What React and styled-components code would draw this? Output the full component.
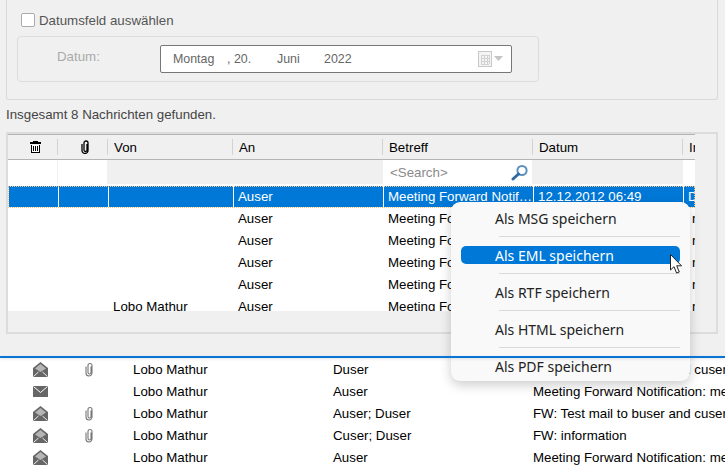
import React from "react";
import styled, { createGlobalStyle } from "styled-components";

const GlobalStyle = createGlobalStyle`
  html, body {
    margin: 0;
    height: 100%;
    overflow: hidden;
    background: #f0f0f0;
  }
  body {
    font-family: "Liberation Sans", Arial, sans-serif;
    font-size: 13.3px;
    color: #000;
  }
`;

const Page = styled.div`
  position: relative;
  width: 725px;
  height: 465px;
  overflow: hidden;
`;

// filter part
const FilterPanel = styled.section`
  box-sizing: border-box;
  width: 712px;
  height: 100px;
  margin-left: 6px;
  padding: 10px 0 0 10px;
  border: 1px solid #d9d9d9;
  border-top: none;
  border-radius: 0 0 3px 3px;
`;
const CheckRow = styled.label`
  display: flex;
  align-items: center;
  gap: 4px;
  height: 20px;
  margin: 0 0 6px 4px;
  color: #555;
`;
const CheckBox = styled.span`
  box-sizing: border-box;
  width: 14px;
  height: 14px;
  background: #fff;
  border: 1px solid #aaa;
  border-radius: 2px;
`;
const DateBox = styled.div`
  box-sizing: border-box;
  display: flex;
  align-items: center;
  width: 522px;
  height: 46px;
  padding-left: 39px;
  border: 1px solid #dcdcdc;
  border-radius: 4px;
`;
const DateLabel = styled.span`
  width: 103px;
  margin-bottom: 5px;
  color: #aaa;
`;
const DateField = styled.div`
  box-sizing: border-box;
  display: flex;
  align-items: center;
  width: 352px;
  height: 28px;
  padding: 0 8px 0 12px;
  background: #fff;
  border: 1px solid #777;
  border-radius: 2px;
  color: #666;
  font-size: 12.4px;
`;
const DatePart = styled.span`
  width: ${(p) => p.$w}px;
`;
const CalendarButton = styled.span`
  display: flex;
  align-items: center;
  margin-left: auto;
`;

const Summary = styled.p`
  box-sizing: border-box;
  height: 32px;
  margin: 0;
  padding: 7px 0 0 6px;
  line-height: 16px;
  color: #444;
`;

// result table
const TableFrame = styled.section`
  box-sizing: border-box;
  width: 712px;
  height: 202px;
  margin-left: 6px;
  border: 2px solid #dcdcdc;
`;
const Table = styled.div`
  width: 687px;
  height: 177px;
  overflow: hidden;
`;
const columns = "50px 50px 125px 150px 150px 150px 150px";
const HeaderRow = styled.div`
  box-sizing: border-box;
  display: grid;
  grid-template-columns: ${columns};
  height: 26px;
  border-top: 1px solid #b4b4b4;
  border-bottom: 1px solid #b4b4b4;
`;
const HeaderCell = styled.div`
  display: flex;
  align-items: center;
  justify-content: ${(p) => (p.$icon ? "center" : "flex-start")};
  padding-left: ${(p) => (p.$icon ? 5 : 6)}px;
  position: relative;
  &::after {
    content: "";
    position: absolute;
    right: 0;
    top: 4px;
    bottom: 4px;
    width: 1px;
    background: #d2d2d2;
  }
`;
const SearchRow = styled.div`
  display: grid;
  grid-template-columns: ${columns};
  height: 24px;
  margin-bottom: 2px;
  box-shadow: 0 2px 0 #fff;
`;
const SearchCell = styled.div`
  display: flex;
  align-items: center;
  justify-content: space-between;
  padding: 0 3px 0 7px;
  margin-right: 1px;
  background: ${(p) => (p.$white ? "#fff" : "#f0f0f0")};
  color: #8a8a8a;
`;
const Rows = styled.div`
  height: 125px;
  background: #fff;
  overflow: hidden;
`;
const Row = styled.div`
  box-sizing: border-box;
  display: grid;
  grid-template-columns: ${columns};
  height: 22px;
  color: ${(p) => (p.$selected ? "#fff" : "#000")};
  background: ${(p) => (p.$selected ? "#0078d7" : "#fff")};
  border-bottom: 1px solid #fff;
  outline: ${(p) => (p.$selected ? "1px dotted #f2c48a" : "none")};
  outline-offset: -1px;
`;
const Cell = styled.div`
  display: flex;
  align-items: center;
  min-width: 0;
  padding-left: ${(p) => p.$pad ?? 4}px;
  border-left: 1px solid ${(p) => (p.$selected ? "#fff" : "transparent")};
  white-space: nowrap;
`;
const CellText = styled.span`
  overflow: hidden;
  text-overflow: ellipsis;
`;

const BlueLine = styled.div`
  position: relative;
  z-index: 1;
  height: 2px;
  margin-top: 22px;
  background: #0a74d4;
  box-shadow: 0 1px 3px rgba(0, 0, 0, 0.12);
`;

// mail list under the splitter
const MailList = styled.section`
  height: 107px;
  background: #fff;
  overflow: hidden;
`;
const MailRow = styled.div`
  display: grid;
  grid-template-columns: 50px 48px 220px 200px 1fr;
  align-items: center;
  height: 22px;
  padding-left: 15px;
  white-space: nowrap;
`;
const IconCell = styled.div`
  display: flex;
  justify-content: center;
`;
const NameCell = styled.div`
  padding-left: 20px;
`;

// context menu
const Menu = styled.div`
  position: absolute;
  left: 451px;
  top: 202px;
  box-sizing: border-box;
  width: 239px;
  height: 179px;
  padding: 0 10px;
  overflow: hidden;
  background: #f9f9f9;
  border-radius: 9px;
  box-shadow: 0 4px 12px rgba(0, 0, 0, 0.2);
  font-family: "Noto Sans", "Open Sans", sans-serif;
  font-size: 14px;
  color: #222;
`;
const MenuItem = styled.div`
  display: flex;
  align-items: center;
  height: ${(p) => (p.$first ? 34 : 36)}px;
`;
const MenuLabel = styled.span`
  box-sizing: border-box;
  display: block;
  width: 219px;
  height: 18px;
  padding-left: 34px;
  line-height: ${(p) => (p.$first ? 18 : 20)}px;
  border-radius: 5px;
  background: ${(p) => (p.$active ? "#0078d7" : "transparent")};
  color: ${(p) => (p.$active ? "#fff" : "#222")};
`;
const MenuDivider = styled.div`
  height: 1px;
  margin-left: 38px;
  background: #d9d9d9;
`;
const Pointer = styled.svg`
  position: absolute;
  left: 670px;
  top: 254px;
`;

const TrashIcon = () => (
  <svg width="13" height="14" viewBox="0 0 13 14" shapeRendering="crispEdges">
    <path d="M4 1h5v1h3v2H1V2h3zM2 5h9v8H2z" fill="#000" />
    <path d="M3 5h7v7H3z" fill="#fff" />
    <path d="M4 6h1v5H4zM6 6h1v5H6zM8 6h1v5H8z" fill="#000" />
  </svg>
);

const ClipIcon = ({ color = "#000", weight = 1.3, height = 14 }) => (
  <svg width="9" height={height} viewBox="0 0 9 14" fill="none">
    <path
      d="M6 4v6a1.5 1.5 0 0 1-3 0V3a2 2 0 0 1 4 0v7.5a3 3 0 0 1-6 0V4"
      stroke={color}
      strokeWidth={weight}
    />
  </svg>
);

const SearchIcon = () => (
  <svg width="18" height="17" viewBox="0 0 18 17" fill="none">
    <circle cx="11" cy="6.5" r="4.6" fill="#fff" stroke="#5b8fc0" strokeWidth="2" />
    <path d="M7.5 10L2 15" stroke="#2f6a9f" strokeWidth="3" strokeLinecap="round" />
  </svg>
);

const CalendarIcon = () => (
  <svg width="25" height="16" viewBox="0 0 25 16" shapeRendering="crispEdges">
    <rect x="0.5" y="0.5" width="13" height="15" fill="#f4f4f4" stroke="#c8c8c8" />
    <path
      d="M3 4h8M3 7h8M3 10h8M3 13h8M3 4v9M6 4v9M9 4v9M11 4v9"
      stroke="#d2d2d2"
      fill="none"
    />
    <path d="M16 5h9l-4.5 5z" fill="#c4c4c4" shapeRendering="auto" />
  </svg>
);

const OpenMailIcon = () => (
  <svg width="15" height="15" viewBox="0 0 15 15">
    <path d="M7.5 0L15 6v9H0V6z" fill="#666" />
    <path d="M7.5 2L13 6.5 7.5 10 2 6.5z" fill="#b5b5b5" />
    <path d="M0.5 14.5L5.5 10M14.5 14.5L9.5 10" stroke="#eee" fill="none" />
  </svg>
);

const ClosedMailIcon = () => (
  <svg width="15" height="11" viewBox="0 0 15 11">
    <rect width="15" height="11" fill="#666" />
    <path d="M0.5 0.5L7.5 6.5L14.5 0.5" stroke="#fff" fill="none" />
  </svg>
);

const tableRows = [
  { von: "", an: "Auser", betreff: "Meeting Forward Notification", datum: "12.12.2012 06:49", last: "D", selected: true },
  { von: "", an: "Auser", betreff: "Meeting Forward Notification", datum: "12.12.2012 06:49", last: "r" },
  { von: "", an: "Auser", betreff: "Meeting Forward Notification", datum: "12.12.2012 06:49", last: "r" },
  { von: "", an: "Auser", betreff: "Meeting Forward Notification", datum: "12.12.2012 06:49", last: "r" },
  { von: "", an: "Auser", betreff: "Meeting Forward Notification", datum: "12.12.2012 06:49", last: "r" },
  { von: "Lobo Mathur", an: "Auser", betreff: "Meeting Forward Notification", datum: "12.12.2012 06:49", last: "r" },
];

const mailRows = [
  { open: true, clip: true, an: "Duser", betreff: "FW: Test mail to buser and cuser" },
  { open: false, clip: false, an: "Auser", betreff: "Meeting Forward Notification: meeting" },
  { open: true, clip: true, an: "Auser; Duser", betreff: "FW: Test mail to buser and cuser" },
  { open: true, clip: true, an: "Cuser; Duser", betreff: "FW: information" },
  { open: true, clip: false, an: "Auser", betreff: "Meeting Forward Notification: meeting" },
];

const menuItems = ["Als MSG speichern", "Als EML speichern", "Als RTF speichern", "Als HTML speichern", "Als PDF speichern"];

export default function App() {
  return (
    <Page>
      <GlobalStyle />
      <FilterPanel>
        <CheckRow>
          <CheckBox />
          Datumsfeld auswählen
        </CheckRow>
        <DateBox>
          <DateLabel>Datum:</DateLabel>
          <DateField>
            <DatePart $w={54}>Montag</DatePart>
            <DatePart $w={50}>, 20.</DatePart>
            <DatePart $w={47}>Juni</DatePart>
            <DatePart $w={40}>2022</DatePart>
            <CalendarButton>
              <CalendarIcon />
            </CalendarButton>
          </DateField>
        </DateBox>
      </FilterPanel>

      <Summary>Insgesamt 8 Nachrichten gefunden.</Summary>

      <TableFrame>
        <Table>
          <HeaderRow>
            <HeaderCell $icon><TrashIcon /></HeaderCell>
            <HeaderCell $icon><ClipIcon /></HeaderCell>
            <HeaderCell>Von</HeaderCell>
            <HeaderCell>An</HeaderCell>
            <HeaderCell>Betreff</HeaderCell>
            <HeaderCell>Datum</HeaderCell>
            <HeaderCell>In</HeaderCell>
          </HeaderRow>
          <SearchRow>
            <SearchCell $white />
            <SearchCell $white />
            <SearchCell />
            <SearchCell />
            <SearchCell $white>
              &lt;Search&gt;
              <SearchIcon />
            </SearchCell>
            <SearchCell />
            <SearchCell $white />
          </SearchRow>
          <Rows>
            {tableRows.map((row, index) => (
              <Row key={index} $selected={row.selected}>
                <Cell $selected={row.selected} />
                <Cell $selected={row.selected} />
                <Cell $selected={row.selected}>{row.von}</Cell>
                <Cell $selected={row.selected}>{row.an}</Cell>
                <Cell $selected={row.selected}><CellText>{row.betreff}</CellText></Cell>
                <Cell $selected={row.selected}><CellText>{row.datum}</CellText></Cell>
                <Cell $selected={row.selected} $pad={row.selected ? 4 : 8}>{row.last}</Cell>
              </Row>
            ))}
          </Rows>
        </Table>
      </TableFrame>

      <BlueLine />

      <MailList>
        {mailRows.map((mail, index) => (
          <MailRow key={index}>
            <IconCell>{mail.open ? <OpenMailIcon /> : <ClosedMailIcon />}</IconCell>
            <IconCell>{mail.clip && <ClipIcon color="#777" weight={1.1} height={15} />}</IconCell>
            <NameCell>Lobo Mathur</NameCell>
            <div>{mail.an}</div>
            <div>{mail.betreff}</div>
          </MailRow>
        ))}
      </MailList>

      <Menu>
        {menuItems.map((item, index) => (
          <React.Fragment key={item}>
            <MenuItem $first={index === 0}>
              <MenuLabel $first={index === 0} $active={index === 1}>{item}</MenuLabel>
            </MenuItem>
            {index < menuItems.length - 1 && <MenuDivider />}
          </React.Fragment>
        ))}
      </Menu>
      <Pointer width="13" height="21" viewBox="0 0 13 21">
        <path d="M0.5 0.5V16L4 12.7 6.6 19 9.3 18 6.7 11.8H11.5z" fill="#fff" stroke="#222" strokeWidth="1" />
      </Pointer>
    </Page>
  );
}
